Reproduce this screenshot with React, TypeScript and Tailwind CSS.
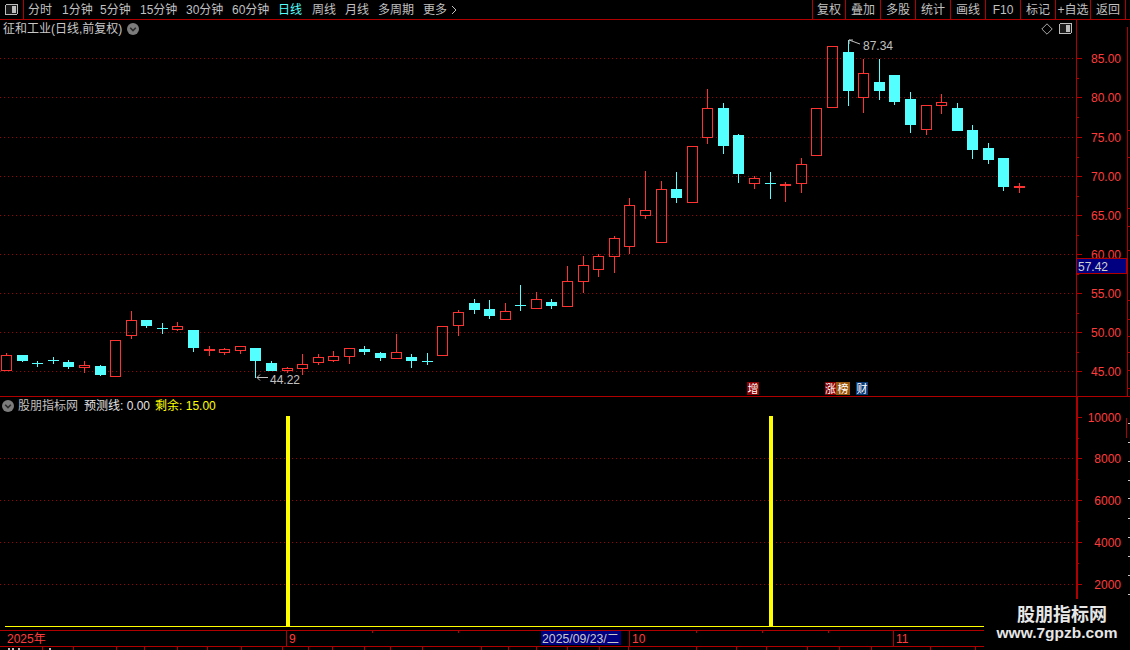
import React from 'react';

const RED = '#ff3232';
const CYAN = '#54ffff';
const LINE = '#b00000';
const DOT = '#a00000';
const AXT = '#ff3c3c';
const FONT = "'Liberation Sans', 'Noto Sans CJK SC', sans-serif";

type K = [string, number, number, number, number];
const K_DATA: K[] = [
  ['r', 355, 371, 353, 371],
  ['c', 355, 361, 355, 362],
  ['x', 363, 363, 361, 367],
  ['x', 360, 360, 357, 364],
  ['c', 362, 367, 360, 369],
  ['r', 365, 368, 361, 373],
  ['c', 366, 375, 365, 376],
  ['r', 340, 377, 340, 377],
  ['r', 320, 336, 311, 339],
  ['c', 320, 326, 320, 328],
  ['x', 328, 328, 323, 334],
  ['r', 326, 330, 322, 331],
  ['c', 330, 348, 330, 352],
  ['d', 350, 350, 346, 356],
  ['r', 349, 353, 348, 355],
  ['r', 346, 351, 346, 354],
  ['c', 348, 361, 348, 378],
  ['c', 363, 371, 361, 371],
  ['r', 368, 371, 367, 373],
  ['r', 364, 369, 354, 375],
  ['r', 357, 363, 354, 365],
  ['r', 356, 361, 351, 362],
  ['r', 348, 357, 348, 364],
  ['c', 349, 352, 346, 355],
  ['c', 353, 358, 352, 361],
  ['r', 352, 359, 334, 359],
  ['c', 357, 361, 354, 368],
  ['x', 361, 361, 353, 365],
  ['r', 326, 356, 326, 356],
  ['r', 312, 326, 310, 336],
  ['c', 303, 310, 299, 314],
  ['c', 309, 316, 300, 319],
  ['r', 311, 320, 303, 320],
  ['x', 305, 305, 285, 311],
  ['r', 299, 309, 292, 309],
  ['c', 302, 306, 299, 309],
  ['r', 281, 307, 266, 307],
  ['r', 265, 282, 256, 293],
  ['r', 256, 270, 254, 277],
  ['r', 238, 257, 236, 273],
  ['r', 205, 247, 198, 254],
  ['r', 210, 216, 171, 219],
  ['r', 189, 243, 181, 243],
  ['c', 189, 198, 172, 203],
  ['r', 146, 203, 146, 203],
  ['r', 108, 138, 89, 144],
  ['c', 108, 146, 103, 154],
  ['c', 135, 174, 134, 183],
  ['r', 178, 184, 176, 189],
  ['x', 183, 183, 172, 199],
  ['d', 185, 185, 182, 202],
  ['r', 164, 184, 158, 193],
  ['r', 108, 156, 108, 156],
  ['r', 46, 108, 46, 108],
  ['c', 52, 91, 40, 106],
  ['r', 73, 98, 59, 113],
  ['c', 82, 91, 59, 100],
  ['c', 75, 102, 75, 105],
  ['c', 99, 125, 92, 133],
  ['r', 105, 130, 105, 135],
  ['r', 102, 106, 94, 114],
  ['c', 108, 131, 103, 131],
  ['c', 130, 150, 125, 159],
  ['c', 148, 160, 143, 164],
  ['c', 158, 187, 158, 191],
  ['d', 187, 187, 183, 193],
];

const leftOf = (i: number) => Math.round(1 + i * 15.585);

function Candle({ k, i }: { k: K; i: number }) {
  const [t, top, bot, hi, lo] = k;
  const left = leftOf(i);
  const cx = left + 5.5;
  const col = t === 'r' || t === 'd' ? RED : CYAN;
  if (t === 'x' || t === 'd') {
    return (
      <g>
        <line x1={cx} x2={cx} y1={hi} y2={lo} stroke={col} />
        {t === 'x' ? (
          <rect x={left} y={top} width={11} height={1} fill={col} />
        ) : (
          <rect x={left} y={top - 1} width={11} height={2} fill={col} />
        )}
      </g>
    );
  }
  return (
    <g>
      {hi < top && <line x1={cx} x2={cx} y1={hi} y2={top} stroke={col} />}
      {lo > bot && <line x1={cx} x2={cx} y1={bot} y2={lo} stroke={col} />}
      {t === 'r' ? (
        <rect x={left + 0.5} y={top + 0.5} width={10} height={bot - top - 1} fill="none" stroke={col} />
      ) : (
        <rect x={left} y={top} width={11} height={bot - top} fill={col} />
      )}
    </g>
  );
}

const PRICE_GRID: [number, string][] = [
  [58, '85.00'],
  [97, '80.00'],
  [137, '75.00'],
  [176, '70.00'],
  [215, '65.00'],
  [254, '60.00'],
  [293, '55.00'],
  [332, '50.00'],
  [371, '45.00'],
];
const PRICE_MINOR = [78, 117, 157, 196, 235, 274, 313, 352];

const VOL_GRID: [number, string][] = [
  [417, '10000'],
  [458, '8000'],
  [500, '6000'],
  [542, '4000'],
  [584, '2000'],
];
const VOL_MINOR = [438, 479, 521, 563, 605];

const STATUS_DIV = [42, 73, 116, 144, 177, 207, 241, 282, 308, 332, 364, 390, 422, 481, 508, 536, 567, 599, 628, 696, 736, 766, 807, 839, 871, 930, 975];

function PanelIcon() {
  return (
    <svg width="13" height="11" viewBox="0 0 13 11" shapeRendering="crispEdges">
      <rect x="0.5" y="0.5" width="12" height="10" rx="1.5" fill="#1a1a1a" stroke="#bdbdbd" />
      <rect x="7" y="2" width="4" height="7" fill="#bdbdbd" />
    </svg>
  );
}

function CircleDown({ size = 12 }: { size?: number }) {
  return (
    <svg width={size} height={size} viewBox="0 0 12 12">
      <circle cx="6" cy="6" r="6" fill="#7c7c7c" />
      <polyline points="3.2,4.8 6,7.6 8.8,4.8" fill="none" stroke="#2a2a2a" strokeWidth="1.6" />
    </svg>
  );
}

const TOOL_ITEMS: { label: string; cls: string; active?: boolean }[] = [
  { label: '分时', cls: 'w-[34px]' },
  { label: '1分钟', cls: 'w-[38px]' },
  { label: '5分钟', cls: 'w-[40px]' },
  { label: '15分钟', cls: 'w-[46px]' },
  { label: '30分钟', cls: 'w-[46px]' },
  { label: '60分钟', cls: 'w-[46px]' },
  { label: '日线', cls: 'w-[34px]', active: true },
  { label: '周线', cls: 'w-[33px]' },
  { label: '月线', cls: 'w-[33px]' },
  { label: '多周期', cls: 'w-[45px]' },
];

const BUTTONS: { label: string; cls: string }[] = [
  { label: '复权', cls: 'w-[33px]' },
  { label: '叠加', cls: 'w-[35px]' },
  { label: '多股', cls: 'w-[35px]' },
  { label: '统计', cls: 'w-[35px]' },
  { label: '画线', cls: 'w-[35px]' },
  { label: 'F10', cls: 'w-[35px]' },
  { label: '标记', cls: 'w-[35px]' },
  { label: '+自选', cls: 'w-[35px]' },
  { label: '返回', cls: 'w-[36px] border-r' },
];

export default function App() {
  return (
    <div
      className="relative w-[1130px] h-[650px] bg-black overflow-hidden flex flex-col select-none"
      style={{ fontFamily: FONT }}
    >
      {/* Toolbar */}
      <div className="h-[20px] shrink-0 flex border-b border-[#b00000] text-[12px] text-[#c0c0c0] leading-none">
        <div className="w-[24px] h-full border-r border-[#b00000] flex items-center justify-center">
          <PanelIcon />
        </div>
        <div className="flex items-center h-full ml-[4px]">
          {TOOL_ITEMS.map((it) => (
            <span key={it.label} className={`${it.cls} shrink-0 whitespace-nowrap ${it.active ? 'text-[#54ffff]' : ''}`}>
              {it.label}
            </span>
          ))}
          <span className="flex items-center whitespace-nowrap">
            更多
            <svg width="8" height="10" viewBox="0 0 8 10" className="ml-[3px]">
              <polyline points="2,1 6,5 2,9" fill="none" stroke="#c0c0c0" strokeWidth="1" />
            </svg>
          </span>
        </div>
        <div className="ml-auto mr-[4px] flex h-full">
          {BUTTONS.map((b) => (
            <div
              key={b.label}
              className={`${b.cls} h-full border-l border-[#b00000] flex items-center justify-center whitespace-nowrap`}
            >
              {b.label}
            </div>
          ))}
        </div>
      </div>

      {/* Main price panel */}
      <div className="h-[377px] shrink-0 flex border-b border-[#b00000]">
        <div className="w-[1076px] flex flex-col">
          <div className="h-[17px] shrink-0 flex items-center pl-[3px] pr-[4px] text-[12px] text-[#c8c8c8] leading-none">
            <span className="whitespace-nowrap">征和工业(日线,前复权)</span>
            <span className="ml-[5px] flex">
              <CircleDown />
            </span>
            <div className="ml-auto flex items-center gap-[6px]">
              <svg width="12" height="12" viewBox="0 0 12 12">
                <polygon points="6,0.8 11.2,6 6,11.2 0.8,6" fill="none" stroke="#a8a8a8" strokeWidth="1" />
              </svg>
              <PanelIcon />
            </div>
          </div>
          <svg width="1076" height="359" viewBox="0 37 1076 359" shapeRendering="crispEdges">
            {PRICE_GRID.map(([y]) => (
              <line key={y} x1="0" x2="1076" y1={y + 0.5} y2={y + 0.5} stroke={DOT} strokeDasharray="1 3" />
            ))}
            {K_DATA.map((k, i) => (
              <Candle key={i} k={k} i={i} />
            ))}
            {/* high label */}
            <g stroke="#c0c0c0" fill="none" shapeRendering="auto">
              <line x1="849" y1="40" x2="860" y2="44" />
              <line x1="849" y1="40" x2="853" y2="40" />
              <line x1="849" y1="40" x2="849" y2="44" />
            </g>
            <text x="863" y="50" fill="#c0c0c0" fontSize="12" fontFamily={FONT}>
              87.34
            </text>
            {/* low label */}
            <g stroke="#c0c0c0" fill="none" shapeRendering="auto">
              <line x1="257" y1="377.5" x2="268" y2="377.5" />
              <polyline points="260,374.5 257,377.5 260,380.5" />
            </g>
            <text x="270" y="384" fill="#c0c0c0" fontSize="12" fontFamily={FONT}>
              44.22
            </text>
            {/* markers */}
            <rect x="747" y="382" width="12" height="13" fill="#8a0000" />
            <text x="753" y="393" fill="#ffffff" fontSize="11" textAnchor="middle" fontFamily={FONT}>
              增
            </text>
            <rect x="825" y="382" width="11" height="13" fill="#8a0000" />
            <text x="830.5" y="393" fill="#ffffff" fontSize="11" textAnchor="middle" fontFamily={FONT}>
              涨
            </text>
            <rect x="836" y="382" width="14" height="13" fill="#9a560c" />
            <text x="843" y="393" fill="#ffffff" fontSize="11" textAnchor="middle" fontFamily={FONT}>
              榜
            </text>
            <rect x="856" y="382" width="12" height="13" fill="#0b3a78" />
            <text x="862" y="393" fill="#ffffff" fontSize="11" textAnchor="middle" fontFamily={FONT}>
              财
            </text>
          </svg>
        </div>
        <svg width="54" height="376" viewBox="1076 20 54 376" shapeRendering="crispEdges">
          <line x1="1076.5" x2="1076.5" y1="20" y2="396" stroke={LINE} />
          <line x1="1127.5" x2="1127.5" y1="27" y2="396" stroke={LINE} />
          {[130, 157, 208, 226, 250, 300, 319, 336, 352, 370, 388].map((y) => (
            <line key={y} x1="1128" x2="1130" y1={y + 0.5} y2={y + 0.5} stroke={LINE} />
          ))}
          {PRICE_GRID.map(([y, label]) => (
            <g key={y}>
              <line x1="1076" x2="1082" y1={y + 0.5} y2={y + 0.5} stroke={LINE} />
              <text x="1121" y={y + 4.5} fill={AXT} fontSize="12" textAnchor="end" fontFamily={FONT}>
                {label}
              </text>
            </g>
          ))}
          {PRICE_MINOR.map((y) => (
            <line key={y} x1="1076" x2="1079" y1={y + 0.5} y2={y + 0.5} stroke={LINE} />
          ))}
          <rect x="1076.5" y="258.5" width="50" height="15" fill="#000080" stroke={LINE} />
          <text x="1078" y="270.5" fill="#d0d0d0" fontSize="12" fontFamily={FONT}>
            57.42
          </text>
        </svg>
      </div>

      {/* Indicator panel */}
      <div className="h-[234px] shrink-0 flex border-b border-[#b00000]">
        <div className="w-[1076px] flex flex-col">
          <div className="h-[17px] shrink-0 flex items-center pl-[2px] text-[12px] leading-none whitespace-nowrap">
            <CircleDown />
            <span className="ml-[4px] text-[#c0c0c0]">股朋指标网</span>
            <span className="ml-[6px] text-[#e4e4e4]">预测线: 0.00</span>
            <span className="ml-[5px] text-[#ffff00]">剩余: 15.00</span>
          </div>
          <svg width="1076" height="216" viewBox="0 414 1076 216" shapeRendering="crispEdges">
            {VOL_GRID.slice(1).map(([y]) => (
              <line key={y} x1="0" x2="1076" y1={y + 0.5} y2={y + 0.5} stroke={DOT} strokeDasharray="1 3" />
            ))}
            <rect x={leftOf(18) + 4} y="416" width="4" height="211" fill="#ffff00" />
            <rect x={leftOf(49) + 4} y="416" width="4" height="211" fill="#ffff00" />
            <rect x="5" y="626" width="1071" height="1" fill="#ffff00" />
          </svg>
        </div>
        <svg width="54" height="233" viewBox="1076 397 54 233" shapeRendering="crispEdges">
          <rect x="1076" y="397" width="2" height="233" fill={LINE} />
          <line x1="1126.5" x2="1126.5" y1="418" y2="438" stroke={LINE} />
          {[423, 442, 461, 480, 498, 518, 537, 556, 575, 594, 613].map((y) => (
            <line key={y} x1="1128" x2="1130" y1={y + 0.5} y2={y + 0.5} stroke="#c8c8c8" />
          ))}
          {VOL_GRID.map(([y, label]) => (
            <g key={y}>
              <line x1="1076" x2="1082" y1={y + 0.5} y2={y + 0.5} stroke={LINE} />
              <text x="1121" y={y + 4.5} fill={AXT} fontSize="12" textAnchor="end" fontFamily={FONT}>
                {label}
              </text>
            </g>
          ))}
          {VOL_MINOR.map((y) => (
            <line key={y} x1="1076" x2="1079" y1={y + 0.5} y2={y + 0.5} stroke={LINE} />
          ))}
        </svg>
      </div>

      {/* Date axis */}
      <div className="h-[16px] shrink-0 border-b border-[#b00000]">
        <svg width="1130" height="15" viewBox="0 631 1130 15" shapeRendering="crispEdges">
          <text x="7" y="643" fill={AXT} fontSize="12" fontFamily={FONT}>
            2025年
          </text>
          <line x1="286.5" x2="286.5" y1="631" y2="646" stroke={LINE} />
          <text x="289" y="643" fill={AXT} fontSize="12" fontFamily={FONT}>
            9
          </text>
          {[372, 458, 696, 762, 828].map((x) => (
            <line key={x} x1={x + 0.5} x2={x + 0.5} y1="631" y2="633" stroke={LINE} />
          ))}
          <rect x="541" y="631" width="80" height="14" fill="#000080" />
          <text
            x="542"
            y="643"
            fill="#c8c8c8"
            fontSize="12"
            fontFamily={FONT}
            textLength="77"
            lengthAdjust="spacingAndGlyphs"
          >
            2025/09/23/二
          </text>
          <line x1="629.5" x2="629.5" y1="631" y2="646" stroke={LINE} />
          <text x="632" y="643" fill={AXT} fontSize="12" fontFamily={FONT}>
            10
          </text>
          <line x1="893.5" x2="893.5" y1="631" y2="646" stroke={LINE} />
          <text x="896" y="643" fill={AXT} fontSize="12" fontFamily={FONT}>
            11
          </text>
        </svg>
      </div>

      {/* Status bar (cut off) */}
      <div className="flex-1">
        <svg width="1130" height="3" viewBox="0 647 1130 3" shapeRendering="crispEdges">
          {STATUS_DIV.map((x) => (
            <line key={x} x1={x + 0.5} x2={x + 0.5} y1="647" y2="650" stroke={LINE} />
          ))}
          <rect x="8" y="648" width="2" height="2" fill="#bbbbbb" />
          <rect x="12" y="648" width="2" height="2" fill="#bbbbbb" />
          <rect x="18" y="648" width="2" height="2" fill="#bbbbbb" />
          <rect x="49" y="648" width="2" height="2" fill="#bbbbbb" />
        </svg>
      </div>

      {/* Watermark */}
      <div className="absolute right-0 bottom-0 w-[146px] h-[51px] bg-black flex flex-col items-center pt-[4px]">
        <div
          className="ml-[10px] text-[18px] font-bold text-[#e6e6e6] leading-[20px]"
          style={{ fontFamily: "'Noto Sans CJK SC', sans-serif" }}
        >
          股朋指标网
        </div>
        <div className="text-[15.5px] text-[#e6e6e6] leading-[20px] font-bold" style={{ fontFamily: "'Liberation Sans', sans-serif" }}>
          www.7gpzb.com
        </div>
      </div>
    </div>
  );
}
